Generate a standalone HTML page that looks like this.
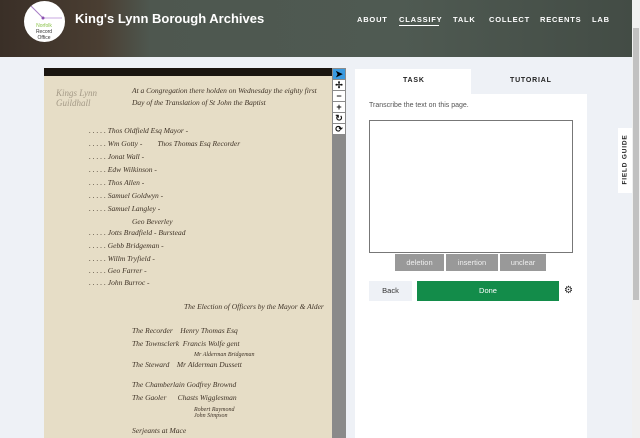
<!DOCTYPE html>
<html><head><style>
*{margin:0;padding:0;box-sizing:border-box}
body{width:640px;height:438px;overflow:hidden;background:#eef1f6;font-family:"Liberation Sans",sans-serif;position:relative}
.hdr{position:absolute;left:0;top:0;width:632px;height:57px;background:linear-gradient(90deg,#3a2f27 0,#4a3e32 100px,#4e574f 150px,#4f5a52 400px,#434c45 632px)}
.logo{position:absolute;left:24px;top:1px;width:41px;height:41px;border-radius:50%;background:#fff;overflow:hidden}
.title{position:absolute;left:75px;top:11px;color:#fff;font-size:13px;font-weight:bold}
.nav{position:absolute;top:15px;color:#fff;font-size:7.5px;font-weight:bold;letter-spacing:.8px}
.img{position:absolute;left:44px;top:68px;width:288px;height:370px;background:#e6ddc6;overflow:hidden}
.img .band{position:absolute;left:0;top:0;width:100%;height:8px;background:#1a1510}
.hw{position:absolute;font-family:"Liberation Serif",serif;font-style:italic;color:#3e3226;font-size:7.5px;white-space:nowrap}
.tb{position:absolute;left:332px;top:68px;width:14px;height:370px;background:#8a8a8a}
.tb div{width:12px;height:10px;margin:1px;background:#fff;font-size:9px;line-height:10px;text-align:center;font-weight:bold;color:#111}
.panel{position:absolute;left:355px;top:69px;width:232px;height:369px;background:#fff}
.tab2{position:absolute;left:116px;top:0;width:116px;height:25px;background:#eef1f6}
.tabt{position:absolute;top:8px;font-size:7px;font-weight:bold;letter-spacing:.8px;color:#222}
.ta{position:absolute;left:14px;top:51px;width:204px;height:133px;border:1px solid #777}
.b{position:absolute;top:185px;height:17px;background:#999;color:#eee;font-size:7.5px;text-align:center;line-height:17px}
</style></head><body>
<div class="hdr">
 <div class="logo"><svg width="41" height="41"><line x1="6" y1="4" x2="19" y2="17" stroke="#a67cc5" stroke-width="1"/><line x1="19" y1="17" x2="38" y2="17" stroke="#c9a8e0" stroke-width="1"/><circle cx="19" cy="17" r="1.5" fill="#8a4fb0"/><text x="20" y="26" font-size="5" fill="#8bc34a" text-anchor="middle" font-family="Liberation Sans">Norfolk</text><text x="20" y="32" font-size="5" fill="#333" text-anchor="middle" font-family="Liberation Sans">Record</text><text x="20" y="38" font-size="5" fill="#333" text-anchor="middle" font-family="Liberation Sans">Office</text></svg></div>
 <div class="title">King's Lynn Borough Archives</div>
 <div class="nav" style="left:357px">ABOUT</div>
 <div class="nav" style="left:399px">CLASSIFY</div>
 <div style="position:absolute;left:399px;top:25px;width:40px;height:1px;background:#fff"></div>
 <div class="nav" style="left:453px">TALK</div>
 <div class="nav" style="left:489px">COLLECT</div>
 <div class="nav" style="left:540px">RECENTS</div>
 <div class="nav" style="left:592px">LAB</div>
</div>
<div class="img"><div class="band"></div>
 <div class="hw" style="left:12px;top:20px;font-size:9px;opacity:.4">Kings Lynn<br>Guildhall</div>
 <div class="hw" style="left:88px;top:18px">At a Congregation there holden on Wednesday the eighty first</div>
 <div class="hw" style="left:88px;top:30px">Day of the Translation of St John the Baptist</div>
 <div class="hw" style="left:45px;top:58px">. . . . . Thos Oldfield Esq Mayor -</div>
 <div class="hw" style="left:45px;top:71px">. . . . . Wm Gotty -&nbsp;&nbsp;&nbsp;&nbsp;&nbsp;&nbsp;&nbsp; Thos Thomas Esq Recorder</div>
 <div class="hw" style="left:45px;top:84px">. . . . . Jonat Wall -</div>
 <div class="hw" style="left:45px;top:97px">. . . . . Edw Wilkinson -</div>
 <div class="hw" style="left:45px;top:110px">. . . . . Thos Allen -</div>
 <div class="hw" style="left:45px;top:123px">. . . . . Samuel Goldwyn -</div>
 <div class="hw" style="left:45px;top:136px">. . . . . Samuel Langley -</div>
 <div class="hw" style="left:88px;top:149px">Geo Beverley</div>
 <div class="hw" style="left:45px;top:160px">. . . . . Jotts Bradfield - Burstead</div>
 <div class="hw" style="left:45px;top:173px">. . . . . Gebb Bridgeman -</div>
 <div class="hw" style="left:45px;top:186px">. . . . . Willm Tryfield -</div>
 <div class="hw" style="left:45px;top:198px">. . . . . Geo Farrer -</div>
 <div class="hw" style="left:45px;top:210px">. . . . . John Burroc -</div>
 <div class="hw" style="left:140px;top:234px">The Election of Officers by the Mayor &amp; Alder</div>
 <div class="hw" style="left:88px;top:258px">The Recorder&nbsp;&nbsp;&nbsp; Henry Thomas Esq</div>
 <div class="hw" style="left:88px;top:271px">The Townsclerk&nbsp; Francis Wolfe gent</div>
 <div class="hw" style="left:150px;top:284px;font-size:6px">Mr Alderman Bridgeman</div>
 <div class="hw" style="left:88px;top:292px">The Steward&nbsp;&nbsp;&nbsp; Mr Alderman Dussett</div>
 <div class="hw" style="left:88px;top:312px">The Chamberlain Godfrey Brownd</div>
 <div class="hw" style="left:88px;top:325px">The Gaoler&nbsp;&nbsp;&nbsp;&nbsp;&nbsp; Chasts Wigglesman</div>
 <div class="hw" style="left:150px;top:339px;font-size:6px">Robert Raymond<br>John Simpson</div>
 <div class="hw" style="left:88px;top:358px">Serjeants at Mace</div>
</div>
<div class="tb">
 <div style="background:#3a9ae0;color:#000">➤</div><div>✢</div><div>−</div><div>+</div><div>↻</div><div>⟳</div>
</div>
<div class="panel">
 <div class="tab2"></div>
 <div class="tabt" style="left:48px">TASK</div>
 <div class="tabt" style="left:155px">TUTORIAL</div>
 <div style="position:absolute;left:14px;top:33px;font-size:7px;color:#555">Transcribe the text on this page.</div>
 <div class="ta"></div>
 <div class="b" style="left:40px;width:49px">deletion</div>
 <div class="b" style="left:91px;width:52px">insertion</div>
 <div class="b" style="left:145px;width:46px">unclear</div>
 <div style="position:absolute;left:14px;top:212px;width:43px;height:20px;background:#eef1f6;font-size:7.5px;color:#333;text-align:center;line-height:20px">Back</div>
 <div style="position:absolute;left:62px;top:212px;width:142px;height:20px;background:#138c4a;font-size:7.5px;color:#fff;text-align:center;line-height:20px">Done</div>
 <div style="position:absolute;left:209px;top:216px;font-size:10px;color:#222">⚙</div>
</div>
<div style="position:absolute;left:618px;top:128px;width:14px;height:65px;background:#fff"><div style="position:absolute;left:-22px;top:28px;width:58px;transform:rotate(-90deg);font-size:6.5px;font-weight:bold;letter-spacing:.8px;text-align:center;color:#222">FIELD GUIDE</div></div>
<div style="position:absolute;left:632px;top:0;width:8px;height:438px;background:#f0f0f0"><div style="position:absolute;left:1px;top:28px;width:6px;height:272px;background:#c1c1c1"></div></div>
</body></html>
